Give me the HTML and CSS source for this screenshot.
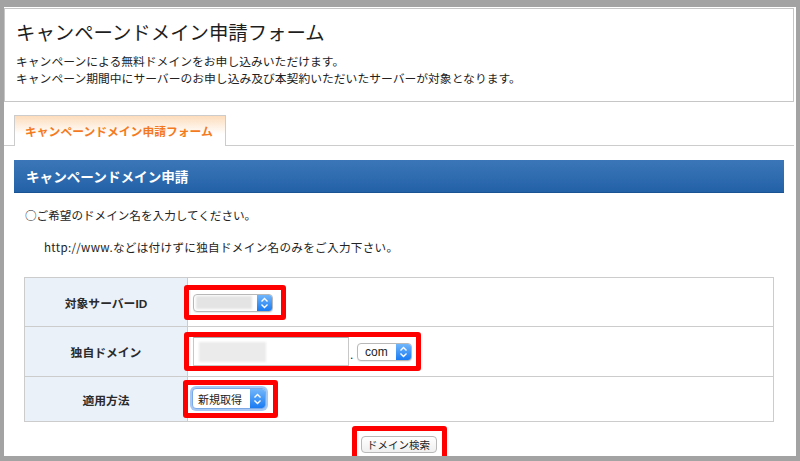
FILE: index.html
```html
<!DOCTYPE html>
<html lang="ja">
<head>
    <meta charset="UTF-8">
    <meta name="viewport" content="width=device-width, initial-scale=1.0">
    <title>キャンペーンドメイン申請フォーム</title>
    <link rel="stylesheet" href="styles.css">
</head>
<body>
    <div class="page">
        <div class="intro">
            <h1>キャンペーンドメイン申請フォーム</h1>
            <p>キャンペーンによる無料ドメインをお申し込みいただけます。<br>キャンペーン期間中にサーバーのお申し込み及び本契約いただいたサーバーが対象となります。</p>
        </div>

        <ul class="tabs">
            <li class="tab active">キャンペーンドメイン申請フォーム</li>
        </ul>

        <div class="content">
            <h2 class="bar">キャンペーンドメイン申請</h2>
            <div class="form-area">
                <p class="lead">○ご希望のドメイン名を入力してください。</p>
                <p class="note">http://www.などは付けずに独自ドメイン名のみをご入力下さい。</p>

                <table class="form-table">
                    <tr class="row-server">
                        <th>対象サーバー<span class="latin">ID</span></th>
                        <td>
                            <span class="mark mark-server">
                                <span class="select select-server">
                                    <span class="value"><span class="blur"></span></span>
                                    <span class="arrow"><svg width="9" height="12" viewBox="0 0 9 12"><path d="M1.5 4.5 4.5 1.5 7.5 4.5M1.5 7.5 4.5 10.5 7.5 7.5" fill="none" stroke="#fff" stroke-width="1.4"/></svg></span>
                                </span>
                            </span>
                        </td>
                    </tr>
                    <tr class="row-domain">
                        <th>独自ドメイン</th>
                        <td>
                            <span class="mark mark-domain">
                                <span class="text-input"><span class="blur"></span></span>
                                <span class="dot">.</span>
                                <span class="select select-tld">
                                    <span class="value">com</span>
                                    <span class="arrow"><svg width="9" height="12" viewBox="0 0 9 12"><path d="M1.5 4.5 4.5 1.5 7.5 4.5M1.5 7.5 4.5 10.5 7.5 7.5" fill="none" stroke="#fff" stroke-width="1.4"/></svg></span>
                                </span>
                            </span>
                        </td>
                    </tr>
                    <tr class="row-method">
                        <th>適用方法</th>
                        <td>
                            <span class="mark mark-method">
                                <span class="select select-method focus">
                                    <span class="value">新規取得</span>
                                    <span class="arrow"><svg width="9" height="12" viewBox="0 0 9 12"><path d="M1.5 4.5 4.5 1.5 7.5 4.5M1.5 7.5 4.5 10.5 7.5 7.5" fill="none" stroke="#fff" stroke-width="1.4"/></svg></span>
                                </span>
                            </span>
                        </td>
                    </tr>
                </table>

                <div class="actions">
                    <span class="mark mark-button"><button class="btn" type="button">ドメイン検索</button></span>
                </div>
            </div>
        </div>
    </div>
</body>
</html>
```

FILE: styles.css
```css
body {
    margin: 0;
    background: #a3a3a3;
    font-family: "Noto Sans CJK JP", sans-serif;
    color: #222;
}
.latin {
    font-family: "Liberation Sans", sans-serif;
}
.page {
    margin: 7px 4px 0;
    height: 449px;
    background: #fff;
    overflow: hidden;
}
.intro {
    margin: 1px 2px 0 0;
    padding: 9px 11px 15px;
    border: 1px solid #c6c6c6;
}
.intro h1 {
    margin: 0 0 6px;
    font-size: 19.4px;
    font-weight: normal;
    line-height: 28px;
    color: #1e1e1e;
}
.intro p {
    margin: 0;
    font-size: 11.8px;
    line-height: 17px;
}
.tabs {
    display: flex;
    margin: 13px 2px 0 0;
    padding: 0 0 0 10px;
    list-style: none;
    border-bottom: 1px solid #cccccc;
}
.tab {
    position: relative;
    height: 30px;
    margin-bottom: -1px;
    padding: 0 12px 0 10px;
    border: 1px solid #cccccc;
    border-bottom: 0;
    background: linear-gradient(#fddcbb, #fff 60%);
    color: #f47a1f;
    font-size: 11.8px;
    font-weight: bold;
    line-height: 30px;
}
.content {
    padding: 14px 12px 0 10px;
}
.bar {
    box-sizing: border-box;
    height: 33px;
    margin: 0;
    padding-left: 12px;
    background: linear-gradient(#3b77b8, #2361a7);
    border-bottom: 1px solid #1a5394;
    color: #fff;
    font-size: 13.6px;
    line-height: 32px;
}
.form-area {
    padding: 0 10px;
}
.lead,
.note {
    font-size: 11.6px;
    line-height: 17px;
}
.lead {
    margin: 14px 0 0 1px;
}
.note {
    margin: 15px 0 0 20px;
    letter-spacing: 0.3px;
}
.form-table {
    width: 100%;
    margin-top: 21px;
    border-collapse: collapse;
}
.form-table th,
.form-table td {
    border: 1px solid #cccccc;
    padding: 0;
}
.form-table th {
    width: 162px;
    background: #eaf1f9;
    font-size: 11.8px;
    color: #2a2a2a;
}
.row-server th { height: 48px; }
.row-domain th { height: 49px; }
.row-method th { height: 44px; }
.mark {
    display: inline-flex;
    align-items: center;
    border: 5px solid #ff0000;
    border-radius: 3px;
    vertical-align: middle;
}
.mark-server {
    margin-left: -4px;
    padding: 4px 8px 3px 4px;
}
.mark-domain {
    margin-left: -4px;
    padding: 0 4px;
}
.mark-method {
    margin-left: -5px;
    padding: 3px 7px 4px 4px;
}
.select {
    box-sizing: border-box;
    display: inline-flex;
    height: 18px;
    border: 1px solid #b8b8b8;
    border-radius: 4px;
    background: #fff;
    overflow: hidden;
    box-shadow: 0 1px 1px rgba(0, 0, 0, 0.08);
}
.select .value {
    flex: 1;
    display: flex;
    align-items: center;
    padding: 0 5px;
    font-size: 11px;
    color: #222;
}
.select .arrow {
    display: flex;
    align-items: center;
    justify-content: center;
    width: 15px;
    background: linear-gradient(#71b6fb, #1a7bf2);
}
.select-server {
    width: 80px;
}
.select-server .value {
    padding: 0 2px;
}
.select-server .blur {
    width: 56px;
    height: 13px;
    background: #e4e4e4;
    filter: blur(0.8px);
}
.text-input {
    box-sizing: border-box;
    display: block;
    width: 156px;
    height: 29px;
    padding: 4px 5px;
    border: 1px solid #c8c8c8;
    border-top-color: #ababab;
}
.text-input .blur {
    display: block;
    width: 67px;
    height: 20px;
    background: #ebebeb;
    filter: blur(0.8px);
}
.dot {
    width: 8px;
    padding-top: 6px;
    font-family: "Liberation Sans", sans-serif;
    font-size: 12px;
    text-indent: 1px;
}
.select-tld {
    width: 55px;
}
.select-tld .value {
    padding-left: 7px;
    font-family: "Liberation Sans", sans-serif;
    font-size: 12px;
}
.select-method {
    width: 74px;
    height: 21px;
}
.select.focus {
    border-color: #7aa9e6;
    box-shadow: 0 0 0 2px #a6c8f5;
}
.actions {
    margin-top: 4px;
    text-align: center;
}
.mark-button {
    padding: 5px 5px 3px 4px;
}
.btn {
    box-sizing: border-box;
    width: 76px;
    height: 17px;
    padding: 0;
    border: 1px solid #b8b8b8;
    border-radius: 4px;
    background: linear-gradient(#fff, #efefef);
    font-family: "Noto Sans CJK JP", sans-serif;
    font-size: 10.5px;
    line-height: 15px;
    color: #222;
}
```
